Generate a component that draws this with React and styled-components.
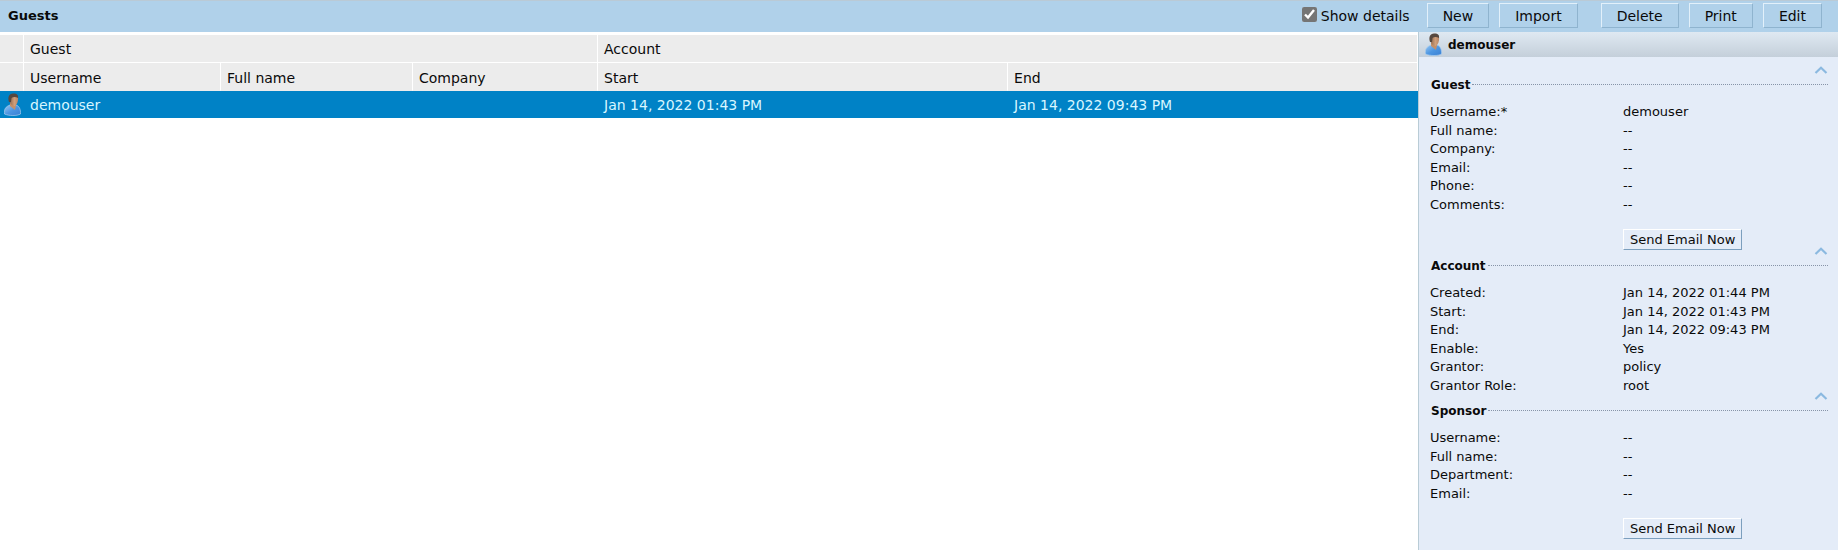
import React, { useState } from "react";
import styled, { createGlobalStyle } from "styled-components";

const GlobalStyle = createGlobalStyle`
  *, *::before, *::after { box-sizing: border-box; }
  body {
    margin: 0;
    background: #fff;
    color: #0a0a0a;
    font-family: "DejaVu Sans", Verdana, sans-serif;
    font-size: 14px;
  }
`;

const Page = styled.div`
  display: flex;
  flex-direction: column;
  min-height: 100vh;
`;

const TopBar = styled.header`
  display: flex;
  align-items: center;
  height: 32px;
  padding: 0 16px 2px 8px;
  border-top: 1px solid #bacad6;
  background: #b0d1ea;
`;

const Title = styled.h1`
  flex: 1;
  margin: 0;
  font-size: 13px;
  line-height: 24px;
`;

const DetailsToggle = styled.label`
  display: flex;
  align-items: center;
  gap: 4px;
  margin-right: 17px;
  line-height: 24px;

  input {
    width: 15px;
    height: 15px;
    margin: 0 0 2px;
    accent-color: #757575;
  }
`;

const ButtonGroup = styled.div`
  display: flex;
  gap: 10px;
  & + & { margin-left: 23px; }
`;

const ToolButton = styled.button`
  height: 25px;
  padding: 0 15px;
  border: 1px solid;
  border-color: #e2f0fa #8fb4cf #8fb4cf #e2f0fa;
  background: #b0d1ea;
  color: inherit;
  font: inherit;
  line-height: 22px;
`;

const Content = styled.div`
  display: flex;
  flex: 1;
`;

const ListPane = styled.main`
  flex: 1;
  min-width: 0;
  padding-top: 3px;
`;

const GuestTable = styled.table`
  width: 100%;
  table-layout: fixed;
  border-collapse: separate;
  border-spacing: 0;
`;

const Col = styled.col`
  width: ${(p) => p.$width || "auto"};
`;

const HeadCell = styled.th`
  height: 28px;
  padding: ${(p) => (p.$last ? "2px 6px 0" : "0 6px")};
  border-right: 1px solid #fff;
  border-bottom: 1px solid ${(p) => (p.$last ? "#ececec" : "#fff")};
  background: #ececec;
  font-weight: 400;
  line-height: 24px;
  text-align: left;
`;

const DataCell = styled.td`
  height: 27px;
  padding: ${(p) => (p.$icon ? "0 4px" : "0 6px")};
  background: #0082c6;
  color: #d8f6ff;
  line-height: 26px;
  white-space: nowrap;
`;

const PersonSvg = styled.svg`
  display: block;
  flex: none;
  width: 17px;
  height: 23px;
`;

const DetailPane = styled.aside`
  width: 420px;
  border-left: 1px solid #b9ccd6;
  background: #e4ecf8;
`;

const DetailHeader = styled.div`
  display: flex;
  align-items: center;
  gap: 6px;
  height: 25px;
  padding-left: 6px;
  background: linear-gradient(#dfe9f2, #c4cfda);
`;

const DetailName = styled.h2`
  margin: 0;
  font-size: 12px;
  line-height: 24px;
`;

const Sections = styled.div`
  padding: 12px 10px 12px 11px;
  font-size: 13px;
`;

const SectionHead = styled.div`
  display: flex;
  flex-direction: column;
  margin-bottom: 10px;
`;

const Collapse = styled.button`
  align-self: flex-end;
  width: 14px;
  height: 10px;
  margin-top: -4px;
  margin-bottom: 2px;
  padding: 0;
  border: 0;
  background: none;

  svg { display: block; }
`;

const HeadingLine = styled.div`
  display: flex;
  align-items: center;
  gap: 2px;
  padding-left: 1px;

  &::after {
    content: "";
    flex: 1;
    margin-bottom: 2px;
    border-top: 1px dotted #8794a8;
  }
`;

const SectionTitle = styled.h3`
  margin: 0;
  font-size: 12px;
  line-height: 16px;
`;

const Fields = styled.dl`
  margin: 0;
`;

const Field = styled.div`
  display: grid;
  grid-template-columns: 193px 1fr;
  line-height: 18px;

  &:nth-child(odd):not(:last-child) { padding-bottom: 1px; }

  dt, dd { margin: 0; }
`;

const EmailButton = styled.button`
  display: block;
  height: 21px;
  margin: 15px 0 0 193px;
  padding: 0 6px;
  border: 1px solid;
  border-color: #fff #7c9fbe #7c9fbe #fff;
  background: #e4ecf8;
  color: inherit;
  font: inherit;
  font-size: 13px;
  line-height: 19px;
`;

function PersonIcon({ id }) {
  return (
    <PersonSvg viewBox="0 0 17 23" aria-hidden="true">
      <defs>
        <linearGradient id={`${id}-shirt`} x1="0" y1="0" x2="1" y2="1">
          <stop offset="0" stopColor="#9bc9f2" />
          <stop offset="0.5" stopColor="#4d96e2" />
          <stop offset="1" stopColor="#3a80d4" />
        </linearGradient>
        <linearGradient id={`${id}-face`} x1="0" y1="0" x2="1" y2="0">
          <stop offset="0" stopColor="#8a6247" />
          <stop offset="0.6" stopColor="#cf9f7b" />
          <stop offset="1" stopColor="#b98565" />
        </linearGradient>
      </defs>
      <path d="M0.500 21 C-0.300 16 2 13.500 6 12 L12 12 C15.500 13 16.800 17 16.500 21 C13 23 5 23 0.500 21Z" fill={`url(#${id}-shirt)`} stroke="#a9cdee" strokeWidth="0.7" />
      <path d="M6 10 L6 13 L11 17 L12 12 L11 10Z" fill="#c58f68" />
      <path d="M5 4 C6 1 13 1 14 4 C14.500 8 13 12 10.500 13 C7 13 5 9 5 4Z" fill={`url(#${id}-face)`} />
      <path d="M5 9 C3.500 4 5 1 9 0.500 C13 0.300 14.500 2 14 5 C12 3.500 9 3.500 7.500 5 L7 9Z" fill="#57483f" />
    </PersonSvg>
  );
}

const sections = [
  {
    title: "Guest",
    email: true,
    fields: [
      ["Username:*", "demouser"],
      ["Full name:", "--"],
      ["Company:", "--"],
      ["Email:", "--"],
      ["Phone:", "--"],
      ["Comments:", "--"],
    ],
  },
  {
    title: "Account",
    fields: [
      ["Created:", "Jan 14, 2022 01:44 PM"],
      ["Start:", "Jan 14, 2022 01:43 PM"],
      ["End:", "Jan 14, 2022 09:43 PM"],
      ["Enable:", "Yes"],
      ["Grantor:", "policy"],
      ["Grantor Role:", "root"],
    ],
  },
  {
    title: "Sponsor",
    email: true,
    fields: [
      ["Username:", "--"],
      ["Full name:", "--"],
      ["Department:", "--"],
      ["Email:", "--"],
    ],
  },
];

function Section({ title, fields, email }) {
  const [open, setOpen] = useState(true);
  return (
    <section>
      <SectionHead>
        <Collapse type="button" aria-label={`Toggle ${title}`} aria-expanded={open} onClick={() => setOpen(!open)}>
          <svg width="14" height="10" viewBox="0 0 14 10">
            <path d="M1.500 8 L7 2.800 L12.500 8" fill="none" stroke="#8bb9e0" strokeWidth="2.200" />
          </svg>
        </Collapse>
        <HeadingLine>
          <SectionTitle>{title}</SectionTitle>
        </HeadingLine>
      </SectionHead>
      {open && (
        <Fields>
          {fields.map(([label, value]) => (
            <Field key={label}>
              <dt>{label}</dt>
              <dd>{value}</dd>
            </Field>
          ))}
        </Fields>
      )}
      {open && email && <EmailButton type="button">Send Email Now</EmailButton>}
    </section>
  );
}

export default function App() {
  const [showDetails, setShowDetails] = useState(true);
  return (
    <Page>
      <GlobalStyle />
      <TopBar>
        <Title>Guests</Title>
        <DetailsToggle>
          <input type="checkbox" checked={showDetails} onChange={(e) => setShowDetails(e.target.checked)} />
          Show details
        </DetailsToggle>
        <ButtonGroup>
          <ToolButton type="button">New</ToolButton>
          <ToolButton type="button">Import</ToolButton>
        </ButtonGroup>
        <ButtonGroup>
          <ToolButton type="button">Delete</ToolButton>
          <ToolButton type="button">Print</ToolButton>
          <ToolButton type="button">Edit</ToolButton>
        </ButtonGroup>
      </TopBar>
      <Content>
        <ListPane>
          <GuestTable>
            <colgroup>
              <Col $width="24px" />
              <Col $width="197px" />
              <Col $width="192px" />
              <Col $width="185px" />
              <Col $width="410px" />
              <Col />
            </colgroup>
            <thead>
              <tr>
                <HeadCell />
                <HeadCell colSpan={3}>Guest</HeadCell>
                <HeadCell colSpan={2}>Account</HeadCell>
              </tr>
              <tr>
                <HeadCell $last />
                <HeadCell $last>Username</HeadCell>
                <HeadCell $last>Full name</HeadCell>
                <HeadCell $last>Company</HeadCell>
                <HeadCell $last>Start</HeadCell>
                <HeadCell $last>End</HeadCell>
              </tr>
            </thead>
            <tbody>
              <tr>
                <DataCell $icon><PersonIcon id="row" /></DataCell>
                <DataCell>demouser</DataCell>
                <DataCell />
                <DataCell />
                <DataCell>Jan 14, 2022 01:43 PM</DataCell>
                <DataCell>Jan 14, 2022 09:43 PM</DataCell>
              </tr>
            </tbody>
          </GuestTable>
        </ListPane>
        {showDetails && (
          <DetailPane>
            <DetailHeader>
              <PersonIcon id="detail" />
              <DetailName>demouser</DetailName>
            </DetailHeader>
            <Sections>
              {sections.map((s) => (
                <Section key={s.title} {...s} />
              ))}
            </Sections>
          </DetailPane>
        )}
      </Content>
    </Page>
  );
}
